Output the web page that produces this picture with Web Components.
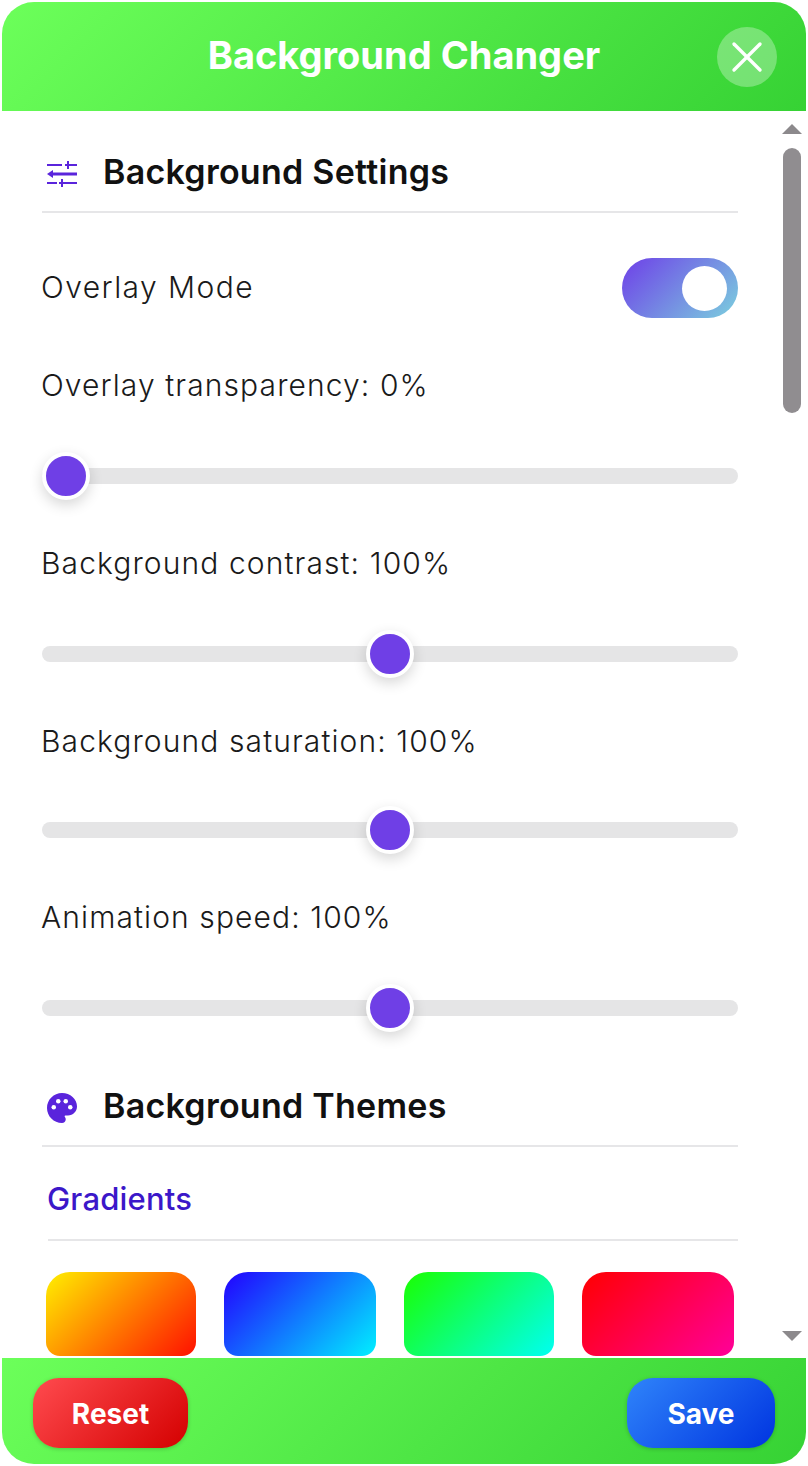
<!DOCTYPE html>
<html lang="en">
<head>
<meta charset="utf-8">
<title>Background Changer</title>
<style>
    html, body { margin: 0; background: #fff; }
    body { padding: 2px; font-family: Inter, "Liberation Sans", sans-serif; color: #222; }
</style>
</head>
<body>
<bg-panel>
    <panel-header slot="header">Background Changer</panel-header>

    <section-heading icon="tune">Background Settings</section-heading>
    <toggle-row>Overlay Mode</toggle-row>
    <range-row value="0">Overlay transparency: 0%</range-row>
    <range-row value="50">Background contrast: 100%</range-row>
    <range-row value="50" style="--label-gap: 49px">Background saturation: 100%</range-row>
    <range-row value="50">Animation speed: 100%</range-row>

    <section-heading icon="palette" style="--heading-top: 55px">Background Themes</section-heading>
    <theme-group label="Gradients">
        <theme-swatch style="--swatch: linear-gradient(135deg, #fff000, #ff1000)"></theme-swatch>
        <theme-swatch style="--swatch: linear-gradient(135deg, #2200ff, #00f0ff)"></theme-swatch>
        <theme-swatch style="--swatch: linear-gradient(135deg, #1aff00, #00fff2)"></theme-swatch>
        <theme-swatch style="--swatch: linear-gradient(135deg, #ff0000, #ff0099)"></theme-swatch>
    </theme-group>

    <panel-footer slot="footer">
        <pill-button style="--fill: linear-gradient(135deg, #ff4b4f, #d40000); --pill-width: 155px">Reset</pill-button>
        <pill-button style="--fill: linear-gradient(135deg, #2f84fa, #0034e0); --pill-width: 148px">Save</pill-button>
    </panel-footer>
</bg-panel>

<script>
    class BgPanel extends HTMLElement {
        constructor() {
            super();
            this.attachShadow({ mode: "open" });
            this.shadowRoot.innerHTML = `
                <style>
                    :host {
                        display: flex;
                        flex-direction: column;
                        height: 1462px;
                        border-radius: 32px;
                        overflow: hidden;
                        background: #fff;
                    }
                    .middle {
                        flex: 1;
                        min-height: 0;
                        display: flex;
                    }
                    .content {
                        flex: 1;
                        min-width: 0;
                        padding: 0 40px;
                        overflow: hidden;
                    }
                </style>
                <slot name="header"></slot>
                <div class="middle">
                    <div class="content"><slot></slot></div>
                    <fake-scrollbar></fake-scrollbar>
                </div>
                <slot name="footer"></slot>
            `;
        }
    }

    class PanelHeader extends HTMLElement {
        constructor() {
            super();
            this.attachShadow({ mode: "open" });
            this.shadowRoot.innerHTML = `
                <style>
                    :host {
                        display: grid;
                        grid-template-columns: 1fr auto 1fr;
                        align-items: center;
                        height: 109px;
                        padding: 0 29px;
                        background: linear-gradient(135deg, #6cff5a, #36d234);
                    }
                    .title {
                        grid-column: 2;
                        margin-bottom: 4px;
                        font-size: 38px;
                        font-weight: 700;
                        color: #fff;
                    }
                    button {
                        grid-column: 3;
                        justify-self: end;
                        width: 60px;
                        height: 60px;
                        padding: 0;
                        border: none;
                        border-radius: 50%;
                        background: rgba(255, 255, 255, 0.3);
                        display: flex;
                        align-items: center;
                        justify-content: center;
                    }
                </style>
                <div class="title"><slot></slot></div>
                <button aria-label="Close">
                    <svg width="32" height="32" viewBox="0 0 32 32" fill="none" stroke="#fff" stroke-width="3.4" stroke-linecap="round">
                        <line x1="3" y1="3" x2="29" y2="29"></line>
                        <line x1="29" y1="3" x2="3" y2="29"></line>
                    </svg>
                </button>
            `;
        }
    }

    class FakeScrollbar extends HTMLElement {
        constructor() {
            super();
            this.attachShadow({ mode: "open" });
            this.shadowRoot.innerHTML = `
                <style>
                    :host {
                        display: flex;
                        flex-direction: column;
                        align-items: center;
                        width: 18px;
                        padding: 13px 5px 17px;
                    }
                    svg { display: block; flex: none; }
                    .thumb {
                        width: 18px;
                        height: 265px;
                        margin-top: 14px;
                        border-radius: 9px;
                        background: #908d90;
                    }
                    .spacer { flex: 1; }
                </style>
                <svg width="20" height="10" viewBox="0 0 20 10"><polygon points="10,0 20,10 0,10" fill="#8c898c"></polygon></svg>
                <div class="thumb"></div>
                <div class="spacer"></div>
                <svg width="20" height="10" viewBox="0 0 20 10"><polygon points="0,0 20,0 10,10" fill="#8c898c"></polygon></svg>
            `;
        }
    }

    const ICONS = {
        tune: `<svg width="36" height="36" viewBox="0 0 36 36" fill="none" stroke="currentColor" stroke-width="2">
                   <path d="M3 9h15M21 9h12M24 5v8"></path>
                   <path d="M7 18h26" stroke-width="3"></path>
                   <path d="M3 18l6-4v8z" fill="currentColor" stroke="none"></path>
                   <path d="M3 27h10M15 27h18M18 23v8"></path>
               </svg>`,
        palette: `<svg width="36" height="36" viewBox="0 0 24 24" fill="currentColor">
                      <path d="M12 2C6.49 2 2 6.49 2 12s4.49 10 10 10c1.38 0 2.5-1.12 2.5-2.5 0-.61-.23-1.2-.64-1.67-.08-.1-.13-.21-.13-.33 0-.28.22-.5.5-.5H16c3.31 0 6-2.69 6-6 0-4.96-4.49-9-10-9z"></path>
                      <g fill="#fff">
                          <circle cx="6.5" cy="11.5" r="1.5"></circle>
                          <circle cx="9.5" cy="7.5" r="1.5"></circle>
                          <circle cx="14.5" cy="7.5" r="1.5"></circle>
                          <circle cx="17.5" cy="11.5" r="1.5"></circle>
                      </g>
                  </svg>`
    };

    class SectionHeading extends HTMLElement {
        constructor() {
            super();
            this.attachShadow({ mode: "open" });
            this.shadowRoot.innerHTML = `
                <style>
                    :host {
                        display: flex;
                        align-items: center;
                        gap: 23px;
                        margin-top: var(--heading-top, 40px);
                        padding: 0 0 18px 2px;
                        border-bottom: 2px solid #e6e6e8;
                        font-size: 34px;
                        line-height: 42px;
                        letter-spacing: 0.26px;
                        font-weight: 600;
                        color: #111;
                    }
                    .icon { display: flex; margin-top: 4px; color: #5a24dc; }
                </style>
                <span class="icon">${ICONS[this.getAttribute("icon")] || ""}</span>
                <span><slot></slot></span>
            `;
        }
    }

    class ToggleRow extends HTMLElement {
        constructor() {
            super();
            this.attachShadow({ mode: "open" });
            this.shadowRoot.innerHTML = `
                <style>
                    :host {
                        display: flex;
                        align-items: center;
                        justify-content: space-between;
                        height: 60px;
                        margin-top: 45px;
                        font-size: 30px;
                        font-weight: 300;
                        letter-spacing: 1.45px;
                        color: #1a1a1a;
                    }
                    .label { margin: 0 0 2px -1px; }
                    .track {
                        display: flex;
                        align-items: center;
                        justify-content: flex-end;
                        width: 105px;
                        height: 60px;
                        padding-right: 11px;
                        border-radius: 30px;
                        background: linear-gradient(135deg, #6e3fe8, #7bd0de);
                    }
                    .knob {
                        width: 45px;
                        height: 45px;
                        border-radius: 50%;
                        background: #fff;
                    }
                </style>
                <span class="label"><slot></slot></span>
                <div class="track"><div class="knob"></div></div>
            `;
        }
    }

    class RangeRow extends HTMLElement {
        constructor() {
            super();
            this.attachShadow({ mode: "open" });
            const value = Number(this.getAttribute("value") || 0) / 100;
            this.shadowRoot.innerHTML = `
                <style>
                    :host {
                        display: block;
                        margin-top: 47px;
                    }
                    :host(:first-of-type) { margin-top: 49px; }
                    .label {
                        margin-left: -1px;
                        font-size: 30px;
                        font-weight: 300;
                        line-height: 36px;
                        letter-spacing: 1.1px;
                        color: #1a1a1a;
                    }
                    .slider {
                        position: relative;
                        display: flex;
                        align-items: center;
                        height: 44px;
                        margin-top: var(--label-gap, 51px);
                    }
                    .track {
                        flex: 1;
                        height: 16px;
                        border-radius: 8px;
                        background: #e5e5e6;
                    }
                    .thumb {
                        position: absolute;
                        top: 50%;
                        left: calc(24px + (100% - 48px) * ${value});
                        width: 40px;
                        height: 40px;
                        border: 4px solid #fff;
                        border-radius: 50%;
                        background: #6f3fe6;
                        box-shadow: 0 5px 14px rgba(0, 0, 0, 0.16);
                        transform: translate(-50%, -50%);
                    }
                </style>
                <div class="label"><slot></slot></div>
                <div class="slider">
                    <div class="track"></div>
                    <div class="thumb"></div>
                </div>
            `;
        }
    }

    class ThemeGroup extends HTMLElement {
        constructor() {
            super();
            this.attachShadow({ mode: "open" });
            this.shadowRoot.innerHTML = `
                <style>
                    :host { display: block; }
                    .label {
                        margin: 34px 0 0 6px;
                        padding-bottom: 22px;
                        border-bottom: 2px solid #e6e6e8;
                        font-size: 31px;
                        line-height: 36px;
                        letter-spacing: 0.2px;
                        text-indent: -1px;
                        font-weight: 500;
                        color: #3b17c9;
                    }
                    .grid {
                        display: grid;
                        grid-template-columns: 150px 152px 150px 152px;
                        gap: 28px;
                        margin: 31px 4px 0;
                    }
                </style>
                <div class="label">${this.getAttribute("label")}</div>
                <div class="grid"><slot></slot></div>
            `;
        }
    }

    class ThemeSwatch extends HTMLElement {
        constructor() {
            super();
            this.attachShadow({ mode: "open" });
            this.shadowRoot.innerHTML = `
                <style>
                    :host {
                        display: block;
                        height: 84px;
                        border-radius: 24px 24px 14px 14px;
                        background: var(--swatch);
                    }
                </style>
            `;
        }
    }

    class PanelFooter extends HTMLElement {
        constructor() {
            super();
            this.attachShadow({ mode: "open" });
            this.shadowRoot.innerHTML = `
                <style>
                    :host {
                        display: flex;
                        align-items: flex-start;
                        justify-content: space-between;
                        height: 86px;
                        padding: 20px 31px 0;
                        background: linear-gradient(135deg, #6cff5a, #36d234);
                    }
                </style>
                <slot></slot>
            `;
        }
    }

    class PillButton extends HTMLElement {
        constructor() {
            super();
            this.attachShadow({ mode: "open" });
            this.shadowRoot.innerHTML = `
                <style>
                    :host {
                        display: flex;
                        align-items: center;
                        justify-content: center;
                        box-sizing: border-box;
                        width: var(--pill-width);
                        height: 70px;
                        padding-top: 2px;
                        border-radius: 26px;
                        background: var(--fill);
                        box-shadow: 0 1px 4px rgba(0, 0, 0, 0.2);
                        font-size: 28px;
                        font-weight: 700;
                        color: #fff;
                    }
                </style>
                <slot></slot>
            `;
        }
    }

    customElements.define("bg-panel", BgPanel);
    customElements.define("panel-header", PanelHeader);
    customElements.define("fake-scrollbar", FakeScrollbar);
    customElements.define("section-heading", SectionHeading);
    customElements.define("toggle-row", ToggleRow);
    customElements.define("range-row", RangeRow);
    customElements.define("theme-group", ThemeGroup);
    customElements.define("theme-swatch", ThemeSwatch);
    customElements.define("panel-footer", PanelFooter);
    customElements.define("pill-button", PillButton);
</script>
</body>
</html>
